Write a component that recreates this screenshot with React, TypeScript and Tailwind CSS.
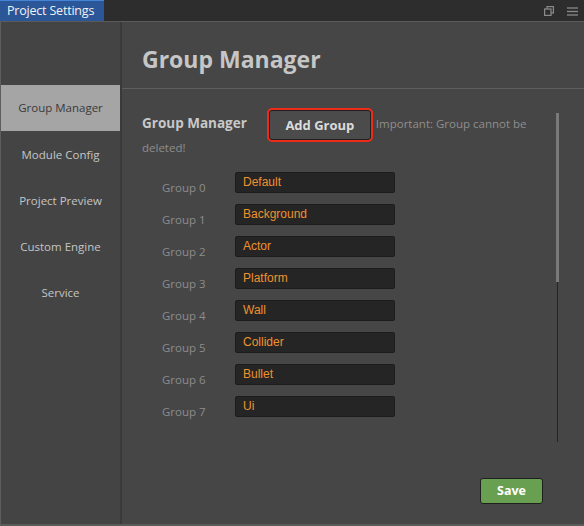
import React from 'react';

const groups = ['Default', 'Background', 'Actor', 'Platform', 'Wall', 'Collider', 'Bullet', 'Ui'];
const menu = ['Group Manager', 'Module Config', 'Project Preview', 'Custom Engine', 'Service'];

export default function App() {
  const font = { fontFamily: '"Open Sans", "Noto Sans", sans-serif' };
  return (
    <div className="flex flex-col w-[584px] h-[526px] bg-[#464646] text-[#bdbdbd] overflow-hidden" style={font}>
      {/* tab bar */}
      <div className="flex h-[22px] bg-[#2d2d2d] border-b border-[#5a5a5a] shrink-0">
        <div className="w-[104px] h-[21px] bg-[#2b5698] border-t border-[#4583d6] text-[#f2f2f2] text-[12.5px] leading-[19px] pl-[7px] tracking-[-0.2px]">
          Project Settings
        </div>
        <div className="flex-1" />
        <div className="flex items-center gap-[13px] pr-[6px] pt-[1px]">
          <svg width="10" height="10" viewBox="0 0 10 10" fill="none" stroke="#8a8a8a" strokeWidth="1.2">
            <rect x="3" y="0.6" width="6.4" height="6.4" />
            <rect x="0.6" y="3" width="6.4" height="6.4" fill="#2d2d2d" />
          </svg>
          <svg width="11" height="9" viewBox="0 0 11 9" stroke="#8a8a8a" strokeWidth="1.3">
            <line x1="0" y1="1" x2="11" y2="1" />
            <line x1="0" y1="4.5" x2="11" y2="4.5" />
            <line x1="0" y1="8" x2="11" y2="8" />
          </svg>
        </div>
      </div>

      <div className="flex flex-1 border-l border-[#5e5e5e] border-b-2 border-b-[#5a5a5a]">
        {/* sidebar */}
        <div className="w-[121px] shrink-0 bg-[#444444] border-r-2 border-[#3a3a3a] pt-[63px] text-[11.5px]">
          {menu.map((m, i) => (
            <div
              key={m}
              className={`h-[46px] flex items-center justify-center ${i === 0 ? 'bg-[#a5a5a5] text-[#3a3a3a] h-[45px] mb-px' : 'text-[#c4c4c4]'}`}
            >
              {m}
            </div>
          ))}
        </div>

        {/* content */}
        <div className="flex-1 flex flex-col">
          <div className="h-[67px] shrink-0 border-b border-[#5e5e5e] flex items-center pl-[20px] text-[23px] font-bold text-[#c6c6c6] pt-[9px]">
            Group Manager
          </div>

          <div className="flex h-[353px]">
            <div className="flex-1 pl-[20px] pt-[22px] pr-[14px]">
              <div className="text-[11.5px] leading-[24px] text-[#8e8e8e]">
                <span className="font-bold text-[13.5px] text-[#c8c8c8] mr-[22px]">Group Manager</span>
                <button className="inline-block align-middle -my-[4px] h-[30px] w-[102px] bg-[#4b4b4b] border border-[#1f1f1f] rounded-[3px] outline-2 outline-[#ee2a18] text-[#dcdcdc] font-bold text-[13px] mr-[5px]">
                  Add Group
                </button>
                Important: Group cannot be deleted!
              </div>

              <div className="flex flex-col gap-[11px] mt-[12px]">
                {groups.map((g, i) => (
                  <div key={g} className="flex items-start h-[21px]">
                    <div className="w-[93px] pl-[20px] text-[11.5px] text-[#8c8c8c] leading-[21px] relative top-[5px]">Group {i}</div>
                    <div
                      className="w-[160px] h-[21px] bg-[#252525] border border-[#1c1c1c] rounded-[2px] pl-[7px] text-[#ef922e] text-[12px] leading-[18px]"
                      style={{ fontFamily: '"Liberation Sans", Arial, sans-serif' }}
                    >
                      {g}
                    </div>
                  </div>
                ))}
              </div>
            </div>

            <div className="w-[3px] mr-[25px] pt-[24px] flex flex-col items-center">
              <div className="w-[3px] h-[169px] bg-[#7a7a7a]" />
              <div className="w-px flex-1 bg-[#252525]" />
            </div>
          </div>

          <div className="flex justify-end pr-[41px] pt-[36px]">
            <button className="w-[63px] h-[26px] bg-[#699f51] border border-[#1f1f1f] rounded-[3px] text-white font-bold text-[12.5px]">
              Save
            </button>
          </div>
        </div>
      </div>
    </div>
  );
}
